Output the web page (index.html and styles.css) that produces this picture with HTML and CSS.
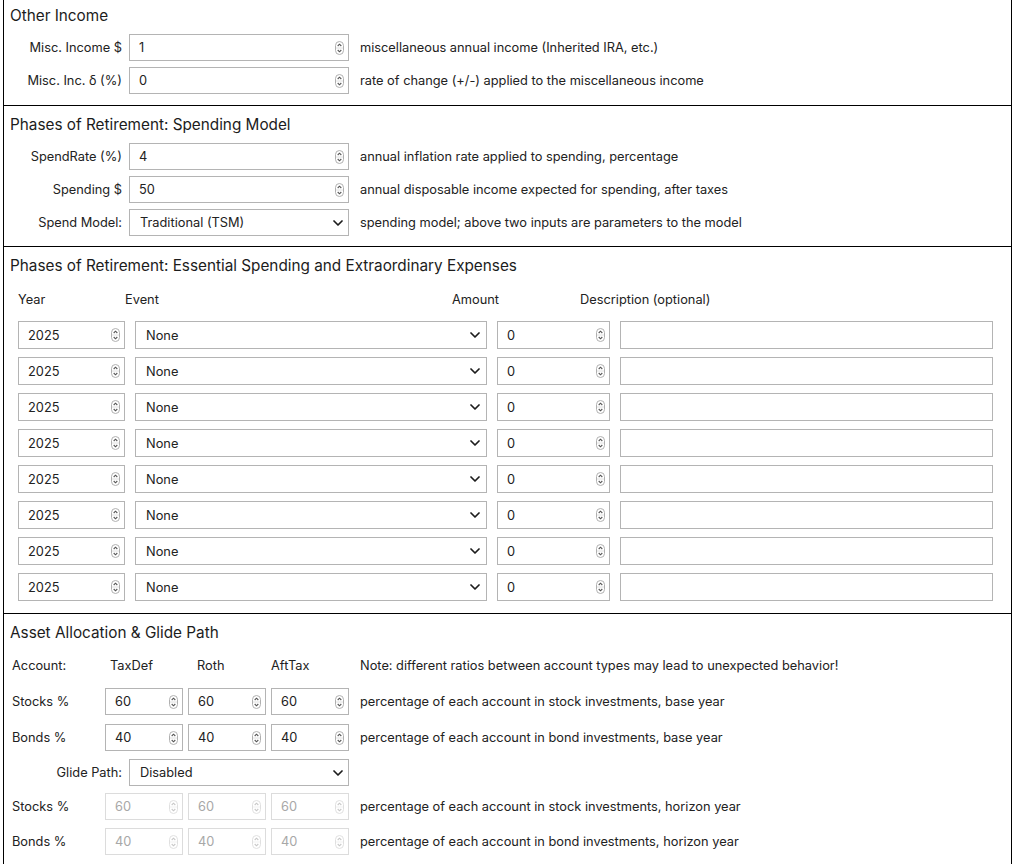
FILE: index.html
```html
<!DOCTYPE html>
<html lang="en">
<head>
<meta charset="utf-8">
<title>Retirement Planner</title>
<link rel="stylesheet" href="styles.css">
</head>
<body>
<div class="page">

  <section class="sec sec-income">
    <h2 class="title">Other Income</h2>
    <div class="form">
      <div class="frow">
        <label class="lbl">Misc. Income $</label>
        <div class="field"><input class="inp" value="1"><svg class="spin" viewBox="0 0 9 14"><rect x="0.5" y="0.5" width="8" height="13" rx="4"/><path class="sl" d="M1 7H8"/><path class="car" d="M2.7 5L4.5 3.2L6.3 5M2.7 9L4.5 10.8L6.3 9"/></svg></div>
        <span class="desc">miscellaneous annual income (Inherited IRA, etc.)</span>
      </div>
      <div class="frow">
        <label class="lbl">Misc. Inc. δ (%)</label>
        <div class="field"><input class="inp" value="0"><svg class="spin" viewBox="0 0 9 14"><rect x="0.5" y="0.5" width="8" height="13" rx="4"/><path class="sl" d="M1 7H8"/><path class="car" d="M2.7 5L4.5 3.2L6.3 5M2.7 9L4.5 10.8L6.3 9"/></svg></div>
        <span class="desc">rate of change (+/-) applied to the miscellaneous income</span>
      </div>
    </div>
  </section>

  <section class="sec sec-spend">
    <h2 class="title">Phases of Retirement: Spending Model</h2>
    <div class="form">
      <div class="frow">
        <label class="lbl">SpendRate (%)</label>
        <div class="field"><input class="inp" value="4"><svg class="spin" viewBox="0 0 9 14"><rect x="0.5" y="0.5" width="8" height="13" rx="4"/><path class="sl" d="M1 7H8"/><path class="car" d="M2.7 5L4.5 3.2L6.3 5M2.7 9L4.5 10.8L6.3 9"/></svg></div>
        <span class="desc">annual inflation rate applied to spending, percentage</span>
      </div>
      <div class="frow">
        <label class="lbl">Spending $</label>
        <div class="field"><input class="inp" value="50"><svg class="spin" viewBox="0 0 9 14"><rect x="0.5" y="0.5" width="8" height="13" rx="4"/><path class="sl" d="M1 7H8"/><path class="car" d="M2.7 5L4.5 3.2L6.3 5M2.7 9L4.5 10.8L6.3 9"/></svg></div>
        <span class="desc">annual disposable income expected for spending, after taxes</span>
      </div>
      <div class="frow">
        <label class="lbl">Spend Model:</label>
        <div class="field sel"><select class="inp"><option>Traditional (TSM)</option></select><svg class="chev" viewBox="0 0 10 6"><path d="M1 1L5 5L9 1"/></svg></div>
        <span class="desc">spending model; above two inputs are parameters to the model</span>
      </div>
    </div>
  </section>

  <section class="sec sec-exp">
    <h2 class="title">Phases of Retirement: Essential Spending and Extraordinary Expenses</h2>
    <div class="ehead">
      <span>Year</span><span>Event</span><span>Amount</span><span>Description (optional)</span>
    </div>
    <div class="erows" id="erows"></div>
  </section>

  <section class="sec sec-alloc">
    <h2 class="title">Asset Allocation &amp; Glide Path</h2>
    <div class="arow ahead">
      <span class="alab">Account:</span>
      <span class="h1">TaxDef</span><span class="h2">Roth</span><span class="h3">AftTax</span>
      <span class="adesc">Note: different ratios between account types may lead to unexpected behavior!</span>
    </div>
    <div class="arow r-stocks">
      <span class="alab">Stocks %</span>
      <div class="field"><input class="inp" value="60"><svg class="spin" viewBox="0 0 9 14"><rect x="0.5" y="0.5" width="8" height="13" rx="4"/><path class="sl" d="M1 7H8"/><path class="car" d="M2.7 5L4.5 3.2L6.3 5M2.7 9L4.5 10.8L6.3 9"/></svg></div>
      <div class="field"><input class="inp" value="60"><svg class="spin" viewBox="0 0 9 14"><rect x="0.5" y="0.5" width="8" height="13" rx="4"/><path class="sl" d="M1 7H8"/><path class="car" d="M2.7 5L4.5 3.2L6.3 5M2.7 9L4.5 10.8L6.3 9"/></svg></div>
      <div class="field"><input class="inp" value="60"><svg class="spin" viewBox="0 0 9 14"><rect x="0.5" y="0.5" width="8" height="13" rx="4"/><path class="sl" d="M1 7H8"/><path class="car" d="M2.7 5L4.5 3.2L6.3 5M2.7 9L4.5 10.8L6.3 9"/></svg></div>
      <span class="adesc">percentage of each account in stock investments, base year</span>
    </div>
    <div class="arow r-bonds">
      <span class="alab">Bonds %</span>
      <div class="field"><input class="inp" value="40"><svg class="spin" viewBox="0 0 9 14"><rect x="0.5" y="0.5" width="8" height="13" rx="4"/><path class="sl" d="M1 7H8"/><path class="car" d="M2.7 5L4.5 3.2L6.3 5M2.7 9L4.5 10.8L6.3 9"/></svg></div>
      <div class="field"><input class="inp" value="40"><svg class="spin" viewBox="0 0 9 14"><rect x="0.5" y="0.5" width="8" height="13" rx="4"/><path class="sl" d="M1 7H8"/><path class="car" d="M2.7 5L4.5 3.2L6.3 5M2.7 9L4.5 10.8L6.3 9"/></svg></div>
      <div class="field"><input class="inp" value="40"><svg class="spin" viewBox="0 0 9 14"><rect x="0.5" y="0.5" width="8" height="13" rx="4"/><path class="sl" d="M1 7H8"/><path class="car" d="M2.7 5L4.5 3.2L6.3 5M2.7 9L4.5 10.8L6.3 9"/></svg></div>
      <span class="adesc">percentage of each account in bond investments, base year</span>
    </div>
    <div class="frow glide">
      <label class="lbl">Glide Path:</label>
      <div class="field sel"><select class="inp"><option>Disabled</option></select><svg class="chev" viewBox="0 0 10 6"><path d="M1 1L5 5L9 1"/></svg></div>
    </div>
    <div class="arow r-hstocks">
      <span class="alab">Stocks %</span>
      <div class="field dis"><input class="inp" value="60" disabled><svg class="spin" viewBox="0 0 9 14"><rect x="0.5" y="0.5" width="8" height="13" rx="4"/><path class="sl" d="M1 7H8"/><path class="car" d="M2.7 5L4.5 3.2L6.3 5M2.7 9L4.5 10.8L6.3 9"/></svg></div>
      <div class="field dis"><input class="inp" value="60" disabled><svg class="spin" viewBox="0 0 9 14"><rect x="0.5" y="0.5" width="8" height="13" rx="4"/><path class="sl" d="M1 7H8"/><path class="car" d="M2.7 5L4.5 3.2L6.3 5M2.7 9L4.5 10.8L6.3 9"/></svg></div>
      <div class="field dis"><input class="inp" value="60" disabled><svg class="spin" viewBox="0 0 9 14"><rect x="0.5" y="0.5" width="8" height="13" rx="4"/><path class="sl" d="M1 7H8"/><path class="car" d="M2.7 5L4.5 3.2L6.3 5M2.7 9L4.5 10.8L6.3 9"/></svg></div>
      <span class="adesc">percentage of each account in stock investments, horizon year</span>
    </div>
    <div class="arow r-hbonds">
      <span class="alab">Bonds %</span>
      <div class="field dis"><input class="inp" value="40" disabled><svg class="spin" viewBox="0 0 9 14"><rect x="0.5" y="0.5" width="8" height="13" rx="4"/><path class="sl" d="M1 7H8"/><path class="car" d="M2.7 5L4.5 3.2L6.3 5M2.7 9L4.5 10.8L6.3 9"/></svg></div>
      <div class="field dis"><input class="inp" value="40" disabled><svg class="spin" viewBox="0 0 9 14"><rect x="0.5" y="0.5" width="8" height="13" rx="4"/><path class="sl" d="M1 7H8"/><path class="car" d="M2.7 5L4.5 3.2L6.3 5M2.7 9L4.5 10.8L6.3 9"/></svg></div>
      <div class="field dis"><input class="inp" value="40" disabled><svg class="spin" viewBox="0 0 9 14"><rect x="0.5" y="0.5" width="8" height="13" rx="4"/><path class="sl" d="M1 7H8"/><path class="car" d="M2.7 5L4.5 3.2L6.3 5M2.7 9L4.5 10.8L6.3 9"/></svg></div>
      <span class="adesc">percentage of each account in bond investments, horizon year</span>
    </div>
  </section>

</div>
<script src="app.js"></script>
</body>
</html>
```

FILE: app.js
```js
(function () {
  var spin = '<svg class="spin" viewBox="0 0 9 14"><rect x="0.5" y="0.5" width="8" height="13" rx="4"/><path class="sl" d="M1 7H8"/><path class="car" d="M2.7 5L4.5 3.2L6.3 5M2.7 9L4.5 10.8L6.3 9"/></svg>';
  var chev = '<svg class="chev" viewBox="0 0 10 6"><path d="M1 1L5 5L9 1"/></svg>';
  var html = '';
  for (var i = 0; i < 8; i++) {
    html += '<div class="erow">' +
      '<div class="field"><input class="inp" value="2025">' + spin + '</div>' +
      '<div class="field sel"><select class="inp"><option>None</option></select>' + chev + '</div>' +
      '<div class="field"><input class="inp" value="0">' + spin + '</div>' +
      '<div class="field"><input class="inp" value=""></div>' +
      '</div>';
  }
  document.getElementById('erows').innerHTML = html;
})();
```

FILE: styles.css
```css
* { box-sizing: border-box; }
html, body { margin: 0; padding: 0; background: #fff; }
body {
  font-family: Inter, "Noto Sans", "Liberation Sans", sans-serif;
  font-size: 12.8px;
  color: #222;
}
.page {
  margin-left: 3px;
  width: 1009px;
}
.sec {
  border-left: 1px solid #000;
  border-right: 1px solid #000;
  border-bottom: 1px solid #000;
  padding-left: 6px;
}
.title {
  margin: 0;
  font-size: 15.3px;
  font-weight: 400;
  line-height: 22px;
  color: #1c1c1c;
}
.sec-income { padding-top: 5px; padding-bottom: 11px; }
.sec-spend { padding-top: 8px; padding-bottom: 10px; }
.sec-exp { padding-top: 8px; padding-bottom: 12px; }
.sec-alloc { padding-top: 8px; padding-bottom: 16px; }

.form {
  margin-top: 7px;
  display: flex;
  flex-direction: column;
  gap: 6px;
}
.frow {
  display: grid;
  grid-template-columns: 125px 220px auto;
  height: 27px;
  align-items: center;
  margin-left: -6px;
}
.lbl {
  text-align: right;
  padding-right: 7px;
  white-space: nowrap;
}
.desc { padding-left: 11px; white-space: nowrap; }

.field {
  height: 100%;
  display: flex;
  align-items: center;
  border: 1px solid #b4b4b4;
  background: #fff;
  padding-right: 4px;
}
.inp {
  flex: 1;
  min-width: 0;
  height: 100%;
  border: 0;
  outline: none;
  background: transparent;
  font: inherit;
  color: #222;
  padding: 0 0 0 9px;
  margin: 0;
}
select.inp {
  appearance: none;
  -webkit-appearance: none;
  padding-left: 10px;
}
.spin { width: 9px; height: 14px; flex: none; }
.spin rect { fill: #fff; stroke: #b0b0b0; stroke-width: 1; }
.spin .sl { stroke: #d8d8d8; stroke-width: 0.8; }
.spin .car { fill: none; stroke: #555; stroke-width: 1.1; }
.chev { width: 10px; height: 6px; flex: none; margin-right: 1px; }
.chev path { fill: none; stroke: #1c1c1c; stroke-width: 1.7; stroke-linecap: round; stroke-linejoin: round; }

.field.dis { border-color: #dcdcdc; }
.field.dis .inp { color: #a8a8a8; }
.field.dis .spin rect { stroke: #e0e0e0; }
.field.dis .spin .car { stroke: #c8c8c8; }
.field.dis .spin .sl { stroke: #eee; }

/* expenses */
.ehead {
  margin-top: 12px;
  margin-left: 8px;
  height: 20px;
  display: grid;
  grid-template-columns: 107px 327px 128px auto;
  align-items: center;
}
.erows {
  margin-top: 12px;
  margin-left: 8px;
  display: flex;
  flex-direction: column;
  gap: 8px;
}
.erow {
  height: 28px;
  display: grid;
  grid-template-columns: 107px 352px 113px 373px;
  column-gap: 10px;
}
.erow .field { height: 28px; }
.erow .field.sel { padding-right: 5px; }

/* allocation */
.arow {
  display: grid;
  grid-template-columns: 90px 78px 78px 78px auto;
  column-gap: 5px;
  height: 27px;
  align-items: center;
}
.alab { padding-left: 2px; white-space: nowrap; }
.adesc { padding-left: 6px; white-space: nowrap; }
.ahead { margin-top: 11px; height: 20px; }
.ahead .h1 { padding-left: 5px; }
.ahead .h2 { padding-left: 9px; }
.ahead .h3 { padding-left: 0; }
.r-stocks { margin-top: 13px; }
.r-bonds { margin-top: 9px; }
.glide { margin-top: 8px; }
.r-hstocks { margin-top: 7px; }
.r-hbonds { margin-top: 8px; }
```
